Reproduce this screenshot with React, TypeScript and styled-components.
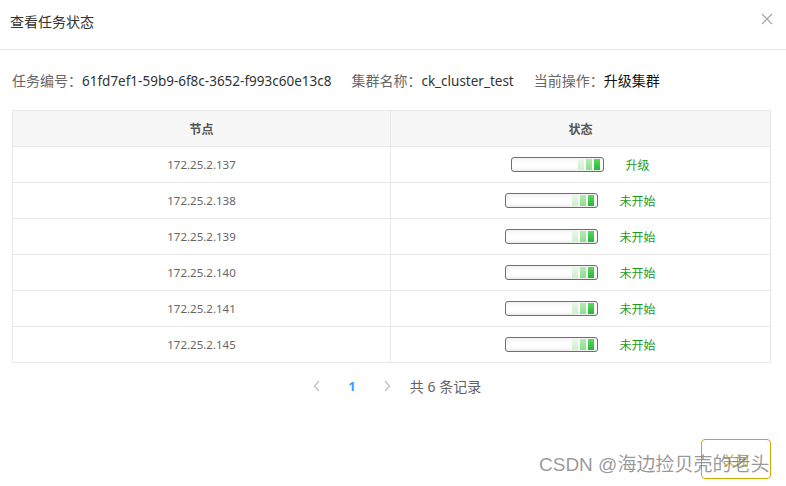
import React from 'react';
import styled, { createGlobalStyle } from 'styled-components';

const GlobalStyle = createGlobalStyle`
  html, body {
    margin: 0;
    padding: 0;
    background: #fff;
  }
  body {
    font-family: "Noto Sans", "Noto Sans CJK SC", sans-serif;
    color: #333;
  }
`;

const Dialog = styled.div`
  position: relative;
  width: 786px;
  height: 486px;
  display: flex;
  flex-direction: column;
  background: #fff;
  overflow: hidden;
`;

const Header = styled.div`
  height: 50px;
  box-sizing: border-box;
  padding: 13px 10px 0 10px;
  border-bottom: 1px solid #e8e8e8;
  display: flex;
  justify-content: space-between;
  align-items: flex-start;
`;

const Title = styled.div`
  font-size: 14px;
  line-height: 18px;
  color: #333;
`;

const CloseX = styled.button`
  border: none;
  background: none;
  padding: 0;
  margin: 0 3px 0 0;
  width: 12px;
  height: 12px;
  cursor: pointer;
  display: flex;
`;

const Body = styled.div`
  padding: 20px 15px 0 12px;
  display: flex;
  flex-direction: column;
`;

const InfoLine = styled.div`
  display: flex;
  gap: 20px;
  font-size: 14px;
  line-height: 22px;
  height: 22px;
`;

const InfoItem = styled.span`
  color: #666;
  white-space: nowrap;
`;

const InfoValue = styled.span<{ $strong?: boolean }>`
  color: ${({ $strong }) => ($strong ? '#111' : '#333')};
  font-size: ${({ $strong }) => ($strong ? '14px' : '13.5px')};
`;

const Table = styled.div`
  margin-top: 18px;
  border: 1px solid #e8e8e8;
  border-bottom: none;
  display: grid;
  grid-template-columns: 378px 1fr;
`;

const Cell = styled.div<{ $head?: boolean }>`
  height: 36px;
  box-sizing: border-box;
  border-bottom: 1px solid #e8e8e8;
  display: flex;
  align-items: center;
  justify-content: center;
  font-size: ${({ $head }) => ($head ? '12px' : '11.5px')};
  color: ${({ $head }) => ($head ? '#555' : '#666')};
  font-weight: ${({ $head }) => ($head ? 600 : 400)};
  background: ${({ $head }) => ($head ? '#f7f7f7' : '#fff')};
  &:nth-child(odd) {
    border-right: 1px solid #e8e8e8;
  }
`;

const StatusWrap = styled.div`
  display: flex;
  align-items: center;
  gap: 21px;
`;

const Bar = styled.div`
  width: 93px;
  height: 15px;
  box-sizing: border-box;
  border: 1px solid #6e6e6e;
  border-radius: 3px;
  background: linear-gradient(#f2f2f2, #fff 40%, #fff 70%, #ececec);
  display: flex;
  justify-content: flex-end;
  align-items: center;
  gap: 2px;
  padding-right: 3px;
`;

const Block = styled.span<{ $level: number }>`
  width: 6px;
  height: 11px;
  background: ${({ $level }) =>
    $level === 1
      ? 'linear-gradient(#e6f8e6, #cdf0cd)'
      : $level === 2
      ? 'linear-gradient(#b4ebb4, #8fdd8f)'
      : 'linear-gradient(#5fd85f, #22bb33)'};
`;

const StatusText = styled.span`
  color: #1a9a1a;
  font-size: 12px;
`;

const Pager = styled.div`
  margin-top: 12px;
  display: flex;
  align-items: center;
  justify-content: center;
  height: 22px;
  font-size: 13px;
  color: #606266;
`;

const PageArrow = styled.span`
  width: 30px;
  display: flex;
  justify-content: center;
`;

const PageNum = styled.span`
  width: 40px;
  text-align: center;
  color: #409eff;
  font-weight: 700;
`;

const Total = styled.span`
  margin-left: 8px;
  font-size: 14px;
`;

const Footer = styled.div`
  margin-top: auto;
  padding: 0 15px 7px 0;
  display: flex;
  justify-content: flex-end;
`;

const CloseButton = styled.button`
  width: 70px;
  height: 40px;
  box-sizing: border-box;
  border: 1px solid #d4a500;
  border-radius: 4px;
  background: #fff;
  color: #d4a500;
  font-size: 13px;
  font-family: inherit;
  padding: 0;
`;

const Watermark = styled.div`
  position: absolute;
  left: 539px;
  top: 452px;
  font-size: 19px;
  line-height: 26px;
  color: rgba(120, 120, 120, 0.75);
  white-space: nowrap;
  pointer-events: none;
  font-family: "Liberation Sans", "Noto Sans CJK SC", sans-serif;
`;

const rows = [
  { ip: '172.25.2.137', status: '升级' },
  { ip: '172.25.2.138', status: '未开始' },
  { ip: '172.25.2.139', status: '未开始' },
  { ip: '172.25.2.140', status: '未开始' },
  { ip: '172.25.2.141', status: '未开始' },
  { ip: '172.25.2.145', status: '未开始' },
];

function Chevron({ dir }: { dir: 'left' | 'right' }) {
  return (
    <svg width="8" height="12" viewBox="0 0 8 12">
      <path
        d={dir === 'left' ? 'M6 1 L1.5 6 L6 11' : 'M2 1 L6.5 6 L2 11'}
        fill="none"
        stroke="#c0c4cc"
        strokeWidth="1.4"
      />
    </svg>
  );
}

export default function App() {
  return (
    <Dialog>
      <GlobalStyle />
      <Header>
        <Title>查看任务状态</Title>
        <CloseX aria-label="close">
          <svg width="12" height="12" viewBox="0 0 12 12">
            <path d="M1 1 L11 11 M11 1 L1 11" stroke="#a0a0a8" strokeWidth="1.1" />
          </svg>
        </CloseX>
      </Header>
      <Body>
        <InfoLine>
          <InfoItem>
            任务编号：<InfoValue>61fd7ef1-59b9-6f8c-3652-f993c60e13c8</InfoValue>
          </InfoItem>
          <InfoItem>
            集群名称：<InfoValue>ck_cluster_test</InfoValue>
          </InfoItem>
          <InfoItem>
            当前操作：<InfoValue $strong>升级集群</InfoValue>
          </InfoItem>
        </InfoLine>
        <Table>
          <Cell $head>节点</Cell>
          <Cell $head>状态</Cell>
          {rows.map((r) => (
            <React.Fragment key={r.ip}>
              <Cell>{r.ip}</Cell>
              <Cell>
                <StatusWrap>
                  <Bar>
                    <Block $level={1} />
                    <Block $level={2} />
                    <Block $level={3} />
                  </Bar>
                  <StatusText>{r.status}</StatusText>
                </StatusWrap>
              </Cell>
            </React.Fragment>
          ))}
        </Table>
        <Pager>
          <PageArrow>
            <Chevron dir="left" />
          </PageArrow>
          <PageNum>1</PageNum>
          <PageArrow>
            <Chevron dir="right" />
          </PageArrow>
          <Total>共 6 条记录</Total>
        </Pager>
      </Body>
      <Footer>
        <CloseButton>关闭</CloseButton>
      </Footer>
      <Watermark>CSDN @海边捡贝壳的老头</Watermark>
    </Dialog>
  );
}
